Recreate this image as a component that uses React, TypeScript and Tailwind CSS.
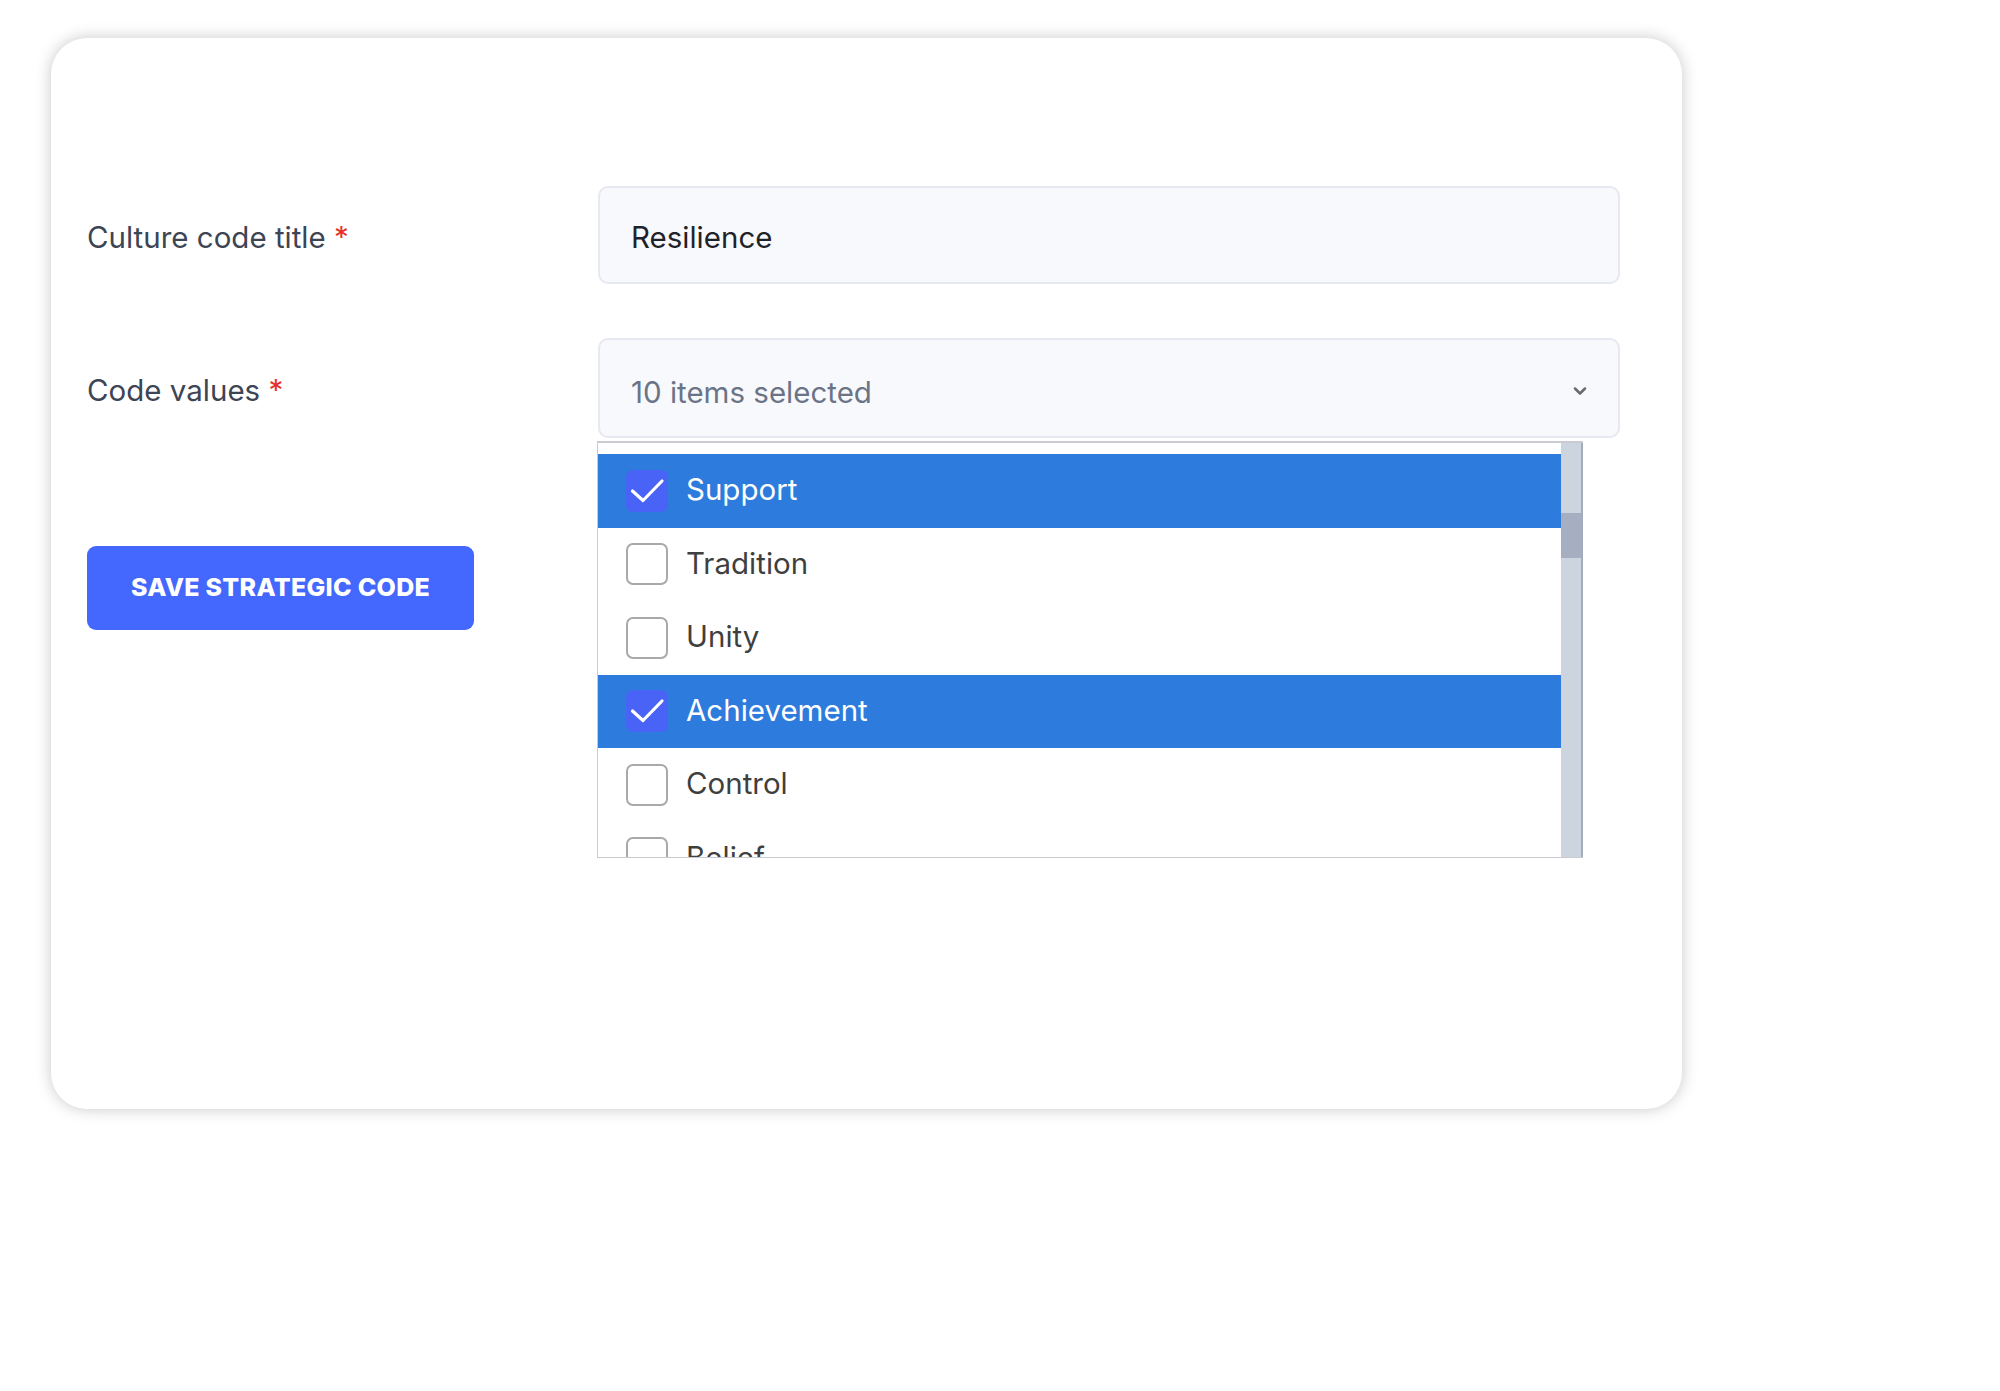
import { ChevronDown } from 'lucide-react';

const options = [
  { label: 'Support', checked: true },
  { label: 'Tradition', checked: false },
  { label: 'Unity', checked: false },
  { label: 'Achievement', checked: true },
  { label: 'Control', checked: false },
  { label: 'Belief', checked: false },
  { label: 'Growth', checked: true },
];

const Checkbox = ({ checked }: { checked: boolean }) => {
  if (checked) {
    return (
      <div className="w-[42px] h-[42px] rounded-[7px] bg-[#4a63f7] flex-none">
        <svg width="42" height="42" viewBox="0 0 42 42" fill="none">
          <path d="M6.5 21 L17 30.5 L36 11" stroke="white" strokeWidth="3.2" strokeLinecap="round" strokeLinejoin="round" />
        </svg>
      </div>
    );
  }
  return <div className="w-[42px] h-[42px] rounded-[7px] border-2 border-[#a9a9a9] bg-white flex-none" />;
};

const Label = ({ text }: { text: string }) => (
  <div className="w-[511px] flex-none text-[29.5px] text-[#3d4454] mt-[4px]">
    {text} <span className="text-[#e8302a]">*</span>
  </div>
);

export default function App() {
  return (
    <div className="w-[2000px] h-[1391px] bg-white pl-[51px] pt-[38px] font-['Inter',sans-serif]">
      <div className="w-[1631px] h-[1071px] rounded-[36px] bg-white shadow-[0_0_16px_rgba(0,0,0,0.22)] pl-[36px] pr-[62px] pt-[148px]">
        {/* Title */}
        <div className="flex items-center">
          <Label text="Culture code title" />
          <div className="flex-1 h-[98px] rounded-[10px] border-2 border-[#e6e9f0] bg-[#f8f9fc] flex items-center pl-[31px] text-[29.5px] text-[#1f2329]">
            <span className="mt-[4px]">Resilience</span>
          </div>
        </div>

        {/* Code values */}
        <div className="flex items-center mt-[54px]">
          <Label text="Code values" />
          <div className="relative flex-1 h-[100px]">
            <div className="h-full rounded-[10px] border-2 border-[#e6e9f0] bg-[#f8f9fc] flex items-center justify-between pl-[31px] pr-[28px] text-[29.5px] text-[#6b7487]">
              <span className="mt-[8px]">10 items selected</span>
              <ChevronDown className="w-[20px] h-[20px] text-[#6a6a6a] mt-[6px]" strokeWidth={3} />
            </div>

            {/* Dropdown menu */}
            <div className="absolute top-[103px] left-[-1px] w-[986px] h-[417px] z-10 flex bg-white border-t-2 border-l border-b border-[#c9cbd0] overflow-hidden">
              <div className="flex-1 pt-[11px] overflow-hidden">
                {options.map((o) => (
                  <div
                    key={o.label}
                    className={`h-[73.5px] flex items-center pl-[28px] gap-[18px] text-[29.5px] ${
                      o.checked ? 'bg-[#2d7bdc] text-white' : 'bg-white text-[#3f3f3f]'
                    }`}
                  >
                    <Checkbox checked={o.checked} />
                    <span className="-mt-[3px]">{o.label}</span>
                  </div>
                ))}
              </div>
              <div className="w-[22px] flex-none bg-[#ccd4e0] border-r-2 border-[#a2acbd] pt-[70px]">
                <div className="h-[45px] bg-[#a5afc1]" />
              </div>
            </div>
          </div>
        </div>

        {/* Save */}
        <button className="mt-[108px] w-[387px] h-[84px] rounded-[9px] bg-[#4467fd] text-white font-extrabold text-[25px] tracking-[0.3px]">
          SAVE STRATEGIC CODE
        </button>
      </div>
    </div>
  );
}
